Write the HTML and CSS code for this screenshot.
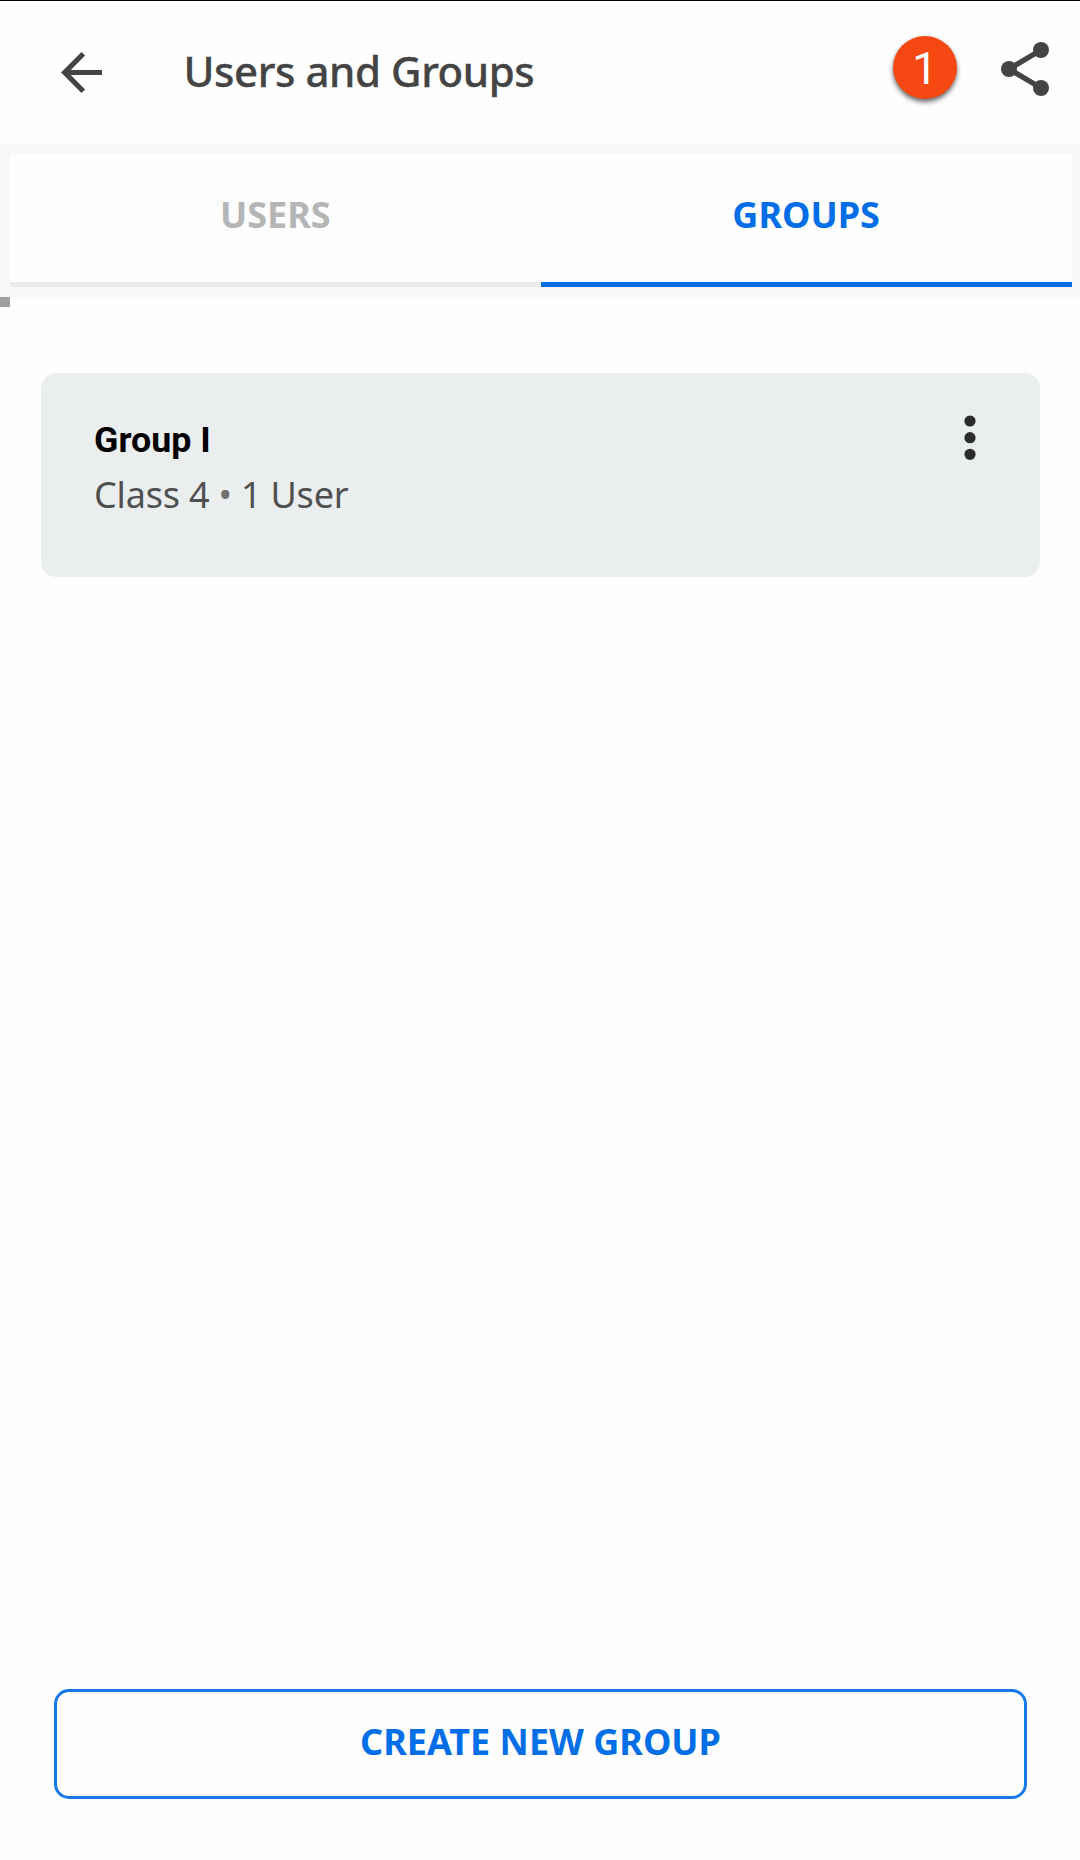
FILE: index.html
```html
<!DOCTYPE html>
<html lang="en">
<head>
<meta charset="utf-8">
<title>Users and Groups</title>
<link rel="stylesheet" href="styles.css">
</head>
<body>
<div class="screen">
  <header class="app-bar">
    <svg class="back" viewBox="0 0 16 16" aria-label="Back"><path d="M16 7H3.83l5.59-5.59L8 0 0 8l8 8 1.41-1.41L3.83 9H16z"/></svg>
    <h1 class="title">Users and Groups</h1>
    <span class="badge">1</span>
    <svg class="share" viewBox="0 0 49 54" aria-label="Share"><path d="M40 8 8 27l32 19"/><circle cx="40" cy="8" r="8"/><circle cx="8" cy="27" r="8"/><circle cx="40" cy="46" r="8"/></svg>
  </header>
  <nav class="tabs">
    <a class="tab">USERS</a>
    <a class="tab active">GROUPS</a>
  </nav>
  <div class="marker"></div>
  <main class="list">
    <article class="card">
      <div>
        <h2 class="name">Group I</h2>
        <p class="detail">Class 4 <span class="bullet">•</span> 1 User</p>
      </div>
      <svg class="more" viewBox="0 0 12 45" aria-label="More"><circle cx="6" cy="6" r="5.6"/><circle cx="6" cy="22.7" r="5.6"/><circle cx="6" cy="39.3" r="5.6"/></svg>
    </article>
  </main>
  <button class="create">CREATE NEW GROUP</button>
</div>
</body>
</html>
```
FILE: styles.css
```css
* { box-sizing: border-box; }
body { margin: 0; background: #fefefe; font-family: "Noto Sans", sans-serif; }
h1, h2, p { margin: 0; }
.screen { display: flex; flex-direction: column; height: 1860px; border-top: 1px solid #000; }
.app-bar { display: flex; align-items: flex-start; height: 143px; padding-left: 61px; padding-right: 30px; }
.back { width: 41px; height: 41px; margin-top: 51px; fill: #444; }
.title { flex: 1; margin: 41px 0 0 81.5px; font-size: 42px; line-height: 58px; font-weight: 500; letter-spacing: -.44px; color: #444; -webkit-text-stroke: .3px #444; }
.badge { display: flex; align-items: center; justify-content: center; width: 64px; height: 63px; margin: 35px 44px 0 0; padding-top: 3px; border-radius: 50%; background: #f54812; color: #fff; font: 45px/60px Roboto, sans-serif; box-shadow: 0 3px 5px rgba(0, 0, 0, .6); }
.share { width: 49px; height: 54px; margin-top: 41px; fill: #444; stroke: none; }
.share path { fill: none; stroke: #444; stroke-width: 5.4; }
.tabs { display: flex; height: 153px; padding: 10px 8.5px 10px 10px; background: #f8f8f8; }
.tab { flex: 1; border-bottom: 5px solid #ebebeb; background: #fdfdfd; color: #b5b5b5; font-size: 36px; line-height: 122px; font-weight: 700; text-align: center; }
.tab.active { border-color: #006ee6; background: #fefefe; color: #006ee6; }
.marker { width: 10px; height: 10px; background: #a0a0a0; }
.list { flex: 1; padding: 66px 40px 0 41px; }
.card { display: flex; justify-content: space-between; height: 204px; padding: 43px 64px 0 53px; border-radius: 15px; background: #eaeeef; }
.name { font: 700 35.8px/48px Roboto, sans-serif; color: #000; }
.detail { margin-top: 6px; font-size: 36px; line-height: 50px; letter-spacing: -.2px; color: #505050; }
.bullet { color: #707070; }
.more { width: 12px; height: 45px; margin-top: -1px; fill: #2c2c2c; }
.create { height: 110px; margin: 0 53px 61px 54px; padding: 0 0 4px; border: 3px solid #1679e8; border-radius: 15px; background: #fefefe; color: #006ee6; font: 700 36px/50px "Noto Sans", sans-serif; }
```
